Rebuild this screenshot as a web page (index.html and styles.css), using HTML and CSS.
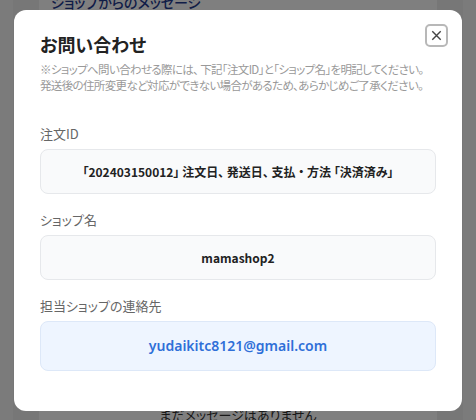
FILE: index.html
```html
<!DOCTYPE html>
<html lang="ja">
<head>
    <meta charset="UTF-8">
    <meta name="viewport" content="width=device-width, initial-scale=1.0">
    <title>お問い合わせ</title>
    <link rel="stylesheet" href="styles.css">
</head>
<body>
    <!-- 背景のページ -->
    <div class="page">
        <div class="card">
            <h2 class="card-title">ショップからのメッセージ</h2>
            <div class="message-list"></div>
            <p class="message-empty">まだメッセージはありません</p>
        </div>
    </div>

    <!-- モーダル -->
    <div class="overlay">
        <div class="modal">
            <button type="button" class="close-btn" aria-label="閉じる">
                <svg viewBox="0 0 16 16">
                    <path d="M3.5 3.5l9 9M12.5 3.5l-9 9"/>
                </svg>
            </button>

            <h1 class="modal-title">お問い合わせ</h1>
            <p class="modal-note">※ショップへ問い合わせる際には、 下記「注文ID」と「ショップ名」を明記してください。<br>発送後の住所変更など対応ができない場合があるため、あらかじめご了承ください。</p>

            <div class="field field-first">
                <div class="field-label">注文ID</div>
                <div class="field-box">「202403150012」 注文日、 発送日、 支払 ・ 方法 「決済済み」</div>
            </div>

            <div class="field">
                <div class="field-label">ショップ名</div>
                <div class="field-box">mamashop2</div>
            </div>

            <div class="field">
                <div class="field-label">担当ショップの連絡先</div>
                <div class="field-box field-contact">yudaikitc8121@gmail.com</div>
            </div>
        </div>
    </div>
</body>
</html>
```

FILE: styles.css
```css
/* 全体 */
body {
    margin: 0;
    font-family: "Noto Sans CJK JP", "Noto Sans", sans-serif;
    background-color: #f6f6f6;
    font-feature-settings: "palt";
}

/* 背景ページ */
.page {
    margin: 0 13px;
    padding: 0 26px;
    background-color: #eeeeee;
    min-height: 100vh;
    overflow: hidden;
}

.card {
    background-color: #ffffff;
    padding: 0 12px;
}

.card-title {
    margin: -8px 0 0;
    font-size: 14px;
    font-weight: 500;
    line-height: 20px;
    color: #1f3a8f;
}

.message-list {
    height: 393px;
}

.message-empty {
    margin: 0;
    text-align: center;
    font-size: 13px;
    line-height: 20px;
    color: #333;
}

/* オーバーレイ */
.overlay {
    position: fixed;
    inset: 0;
    background-color: rgba(0, 0, 0, 0.5);
    display: flex;
    justify-content: center;
    align-items: center;
}

.modal {
    position: relative;
    width: 448px;
    box-sizing: border-box;
    padding: 22px 26px 40px;
    background-color: #ffffff;
    border-radius: 12px;
}

.close-btn {
    position: absolute;
    top: 14px;
    right: 14px;
    width: 23px;
    height: 23px;
    padding: 0;
    border: 2px solid #b8b8b8;
    border-radius: 5px;
    background-color: #ffffff;
    display: flex;
    justify-content: center;
    align-items: center;
    cursor: pointer;
}

.close-btn svg {
    width: 15px;
    height: 15px;
    stroke: #444;
    stroke-width: 1.5;
    fill: none;
}

.modal-title {
    margin: 0;
    font-size: 18px;
    font-weight: 600;
    line-height: 24px;
    color: #222;
}

.modal-note {
    margin: 5px 0 0;
    font-size: 11.5px;
    letter-spacing: -0.65px;
    line-height: 16px;
    color: #999;
    white-space: nowrap;
}

/* 項目 */
.field {
    margin-top: 16px;
}

.field-first {
    margin-top: 31px;
}

.field-label {
    font-size: 13px;
    line-height: 20px;
    color: #666;
    margin-bottom: 5px;
}

.field-box {
    height: 45px;
    box-sizing: border-box;
    border: 1px solid #e6e8eb;
    border-radius: 8px;
    background-color: #f9fafb;
    display: flex;
    justify-content: center;
    align-items: center;
    font-size: 12px;
    font-weight: 700;
    color: #222;
    white-space: nowrap;
}

.field-contact {
    height: 50px;
    border-color: #dde8f8;
    background-color: #eef5ff;
    font-family: "Noto Sans", sans-serif;
    font-size: 14px;
    font-weight: 600;
    color: #2f6fd8;
}
```
